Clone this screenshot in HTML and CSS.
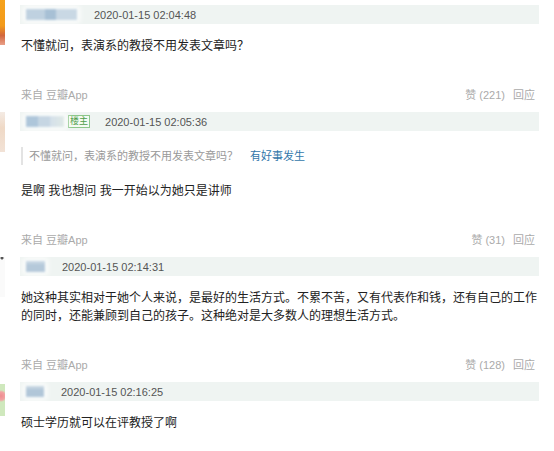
FILE: index.html
```html
<!DOCTYPE html>
<html lang="zh">
<head>
<meta charset="utf-8">
<title>回应</title>
<link rel="stylesheet" href="styles.css">
</head>
<body>
<div class="list">
  <div class="reply">
    <div class="avatar av1"></div>
    <div class="main">
      <div class="head"><span class="user u1"></span><span class="time">2020-01-15 02:04:48</span></div>
      <p class="content">不懂就问，表演系的教授不用发表文章吗？</p>
      <div class="meta"><span class="src">来自 豆瓣App</span><span class="ops"><a>赞 (221)</a><a>回应</a></span></div>
    </div>
  </div>
  <div class="reply">
    <div class="avatar av2"></div>
    <div class="main">
      <div class="head"><span class="user u2"></span><span class="badge">楼主</span><span class="time after-badge">2020-01-15 02:05:36</span></div>
      <div class="quote"><span class="quote-text">不懂就问，表演系的教授不用发表文章吗？</span><a class="quote-user">有好事发生</a></div>
      <p class="content">是啊 我也想问 我一开始以为她只是讲师</p>
      <div class="meta"><span class="src">来自 豆瓣App</span><span class="ops"><a>赞 (31)</a><a>回应</a></span></div>
    </div>
  </div>
  <div class="reply">
    <div class="avatar av3"></div>
    <div class="main">
      <div class="head"><span class="user u3"></span><span class="time">2020-01-15 02:14:31</span></div>
      <p class="content">她这种其实相对于她个人来说，是最好的生活方式。不累不苦，又有代表作和钱，还有自己的工作的同时，还能兼顾到自己的孩子。这种绝对是大多数人的理想生活方式。</p>
      <div class="meta"><span class="src">来自 豆瓣App</span><span class="ops"><a>赞 (128)</a><a>回应</a></span></div>
    </div>
  </div>
  <div class="reply">
    <div class="avatar av4"></div>
    <div class="main">
      <div class="head"><span class="user u4"></span><span class="time">2020-01-15 02:16:25</span></div>
      <p class="content">硕士学历就可以在评教授了啊</p>
    </div>
  </div>
</div>
</body>
</html>
```

FILE: styles.css
```css
html, body {
  margin: 0;
  padding: 0;
  background: #fff;
}
body {
  font-family: "Liberation Sans", "Noto Sans CJK SC", sans-serif;
  overflow: hidden;
}
.list {
  padding: 5px 15px 0 0;
}
.reply {
  display: flex;
  align-items: flex-start;
  gap: 15px;
}
.reply + .reply {
  margin-top: 8px;
}
.avatar {
  flex: none;
  width: 48px;
  height: 40px;
  margin-left: -43px;
}
.av1 {
  height: 48px;
  margin-top: -8px;
  background: linear-gradient(180deg, #f6a31c 0%, #f39a1a 60%, #d2663c 80%, #e9a08a 100%);
}
.av2 {
  background: linear-gradient(180deg, #f4ebe4 0%, #efd9c6 40%, #f2e2d6 100%);
}
.av3 {
  background: radial-gradient(circle at 45px 1px, #555 0, #555 1px, rgba(255,255,255,0) 2px), #fafafa;
}
.av4 {
  height: 32px;
  margin-top: 2px;
  background: radial-gradient(circle at 44px 12px, #ee8c90 0, #f2a2a2 4px, rgba(255,255,255,0) 6px), #cfe8bd;
}
.main {
  flex: 1;
  min-width: 0;
}
.head {
  height: 19px;
  display: flex;
  align-items: center;
  padding-left: 6px;
  background: #eff4f2;
}
.user {
  display: block;
  height: 11px;
  filter: blur(0.8px);
  box-shadow: 0 0 5px 3px rgba(255,255,255,0.85);
}
.u1 {
  width: 51px;
  background: linear-gradient(90deg, #bfd1e0 0, #bfd1e0 19px, #a7c0d5 19px, #a7c0d5 30px, #c9d8e4 30px, #c9d8e4 100%);
}
.u2 {
  width: 38px;
  background: linear-gradient(90deg, #aec6da 0, #aec6da 12px, #c6d6e3 12px, #c6d6e3 24px, #d4e0ea 24px, #dfe9e6 100%);
}
.u3 {
  width: 19px;
  background: linear-gradient(180deg, #c5d5e2 0, #c5d5e2 30%, #b5c9da 30%, #b5c9da 100%);
}
.u4 {
  width: 18px;
  background: linear-gradient(180deg, #c3d3e0 0, #c3d3e0 30%, #b1c6d8 30%, #b1c6d8 100%);
}
.badge {
  margin-left: 4px;
  font-size: 9px;
  line-height: 11px;
  padding: 0 1px;
  color: #4f9d4a;
  border: 1px solid #8dc78a;
  background: #f5fbf3;
}
.time {
  margin-left: 17px;
  font-size: 11px;
  color: #555;
}
.time.after-badge {
  margin-left: 15px;
}
.content {
  margin: 13px 0 0;
  padding-left: 1px;
  font-size: 12px;
  line-height: 18px;
  color: #222;
}
.quote {
  margin: 16px 0 0 1px;
  padding-left: 6px;
  border-left: 2px solid #e3e3e3;
  font-size: 11px;
  line-height: 18px;
  color: #999;
}
.quote-user {
  margin-left: 12px;
  color: #37a;
}
.quote + .content {
  margin-top: 17px;
}
.meta {
  margin-top: 31px;
  display: flex;
  justify-content: space-between;
  padding: 0 4px 0 1px;
  font-size: 11px;
  line-height: 18px;
  color: #aaa;
}
.ops a {
  margin-left: 8px;
}
```
